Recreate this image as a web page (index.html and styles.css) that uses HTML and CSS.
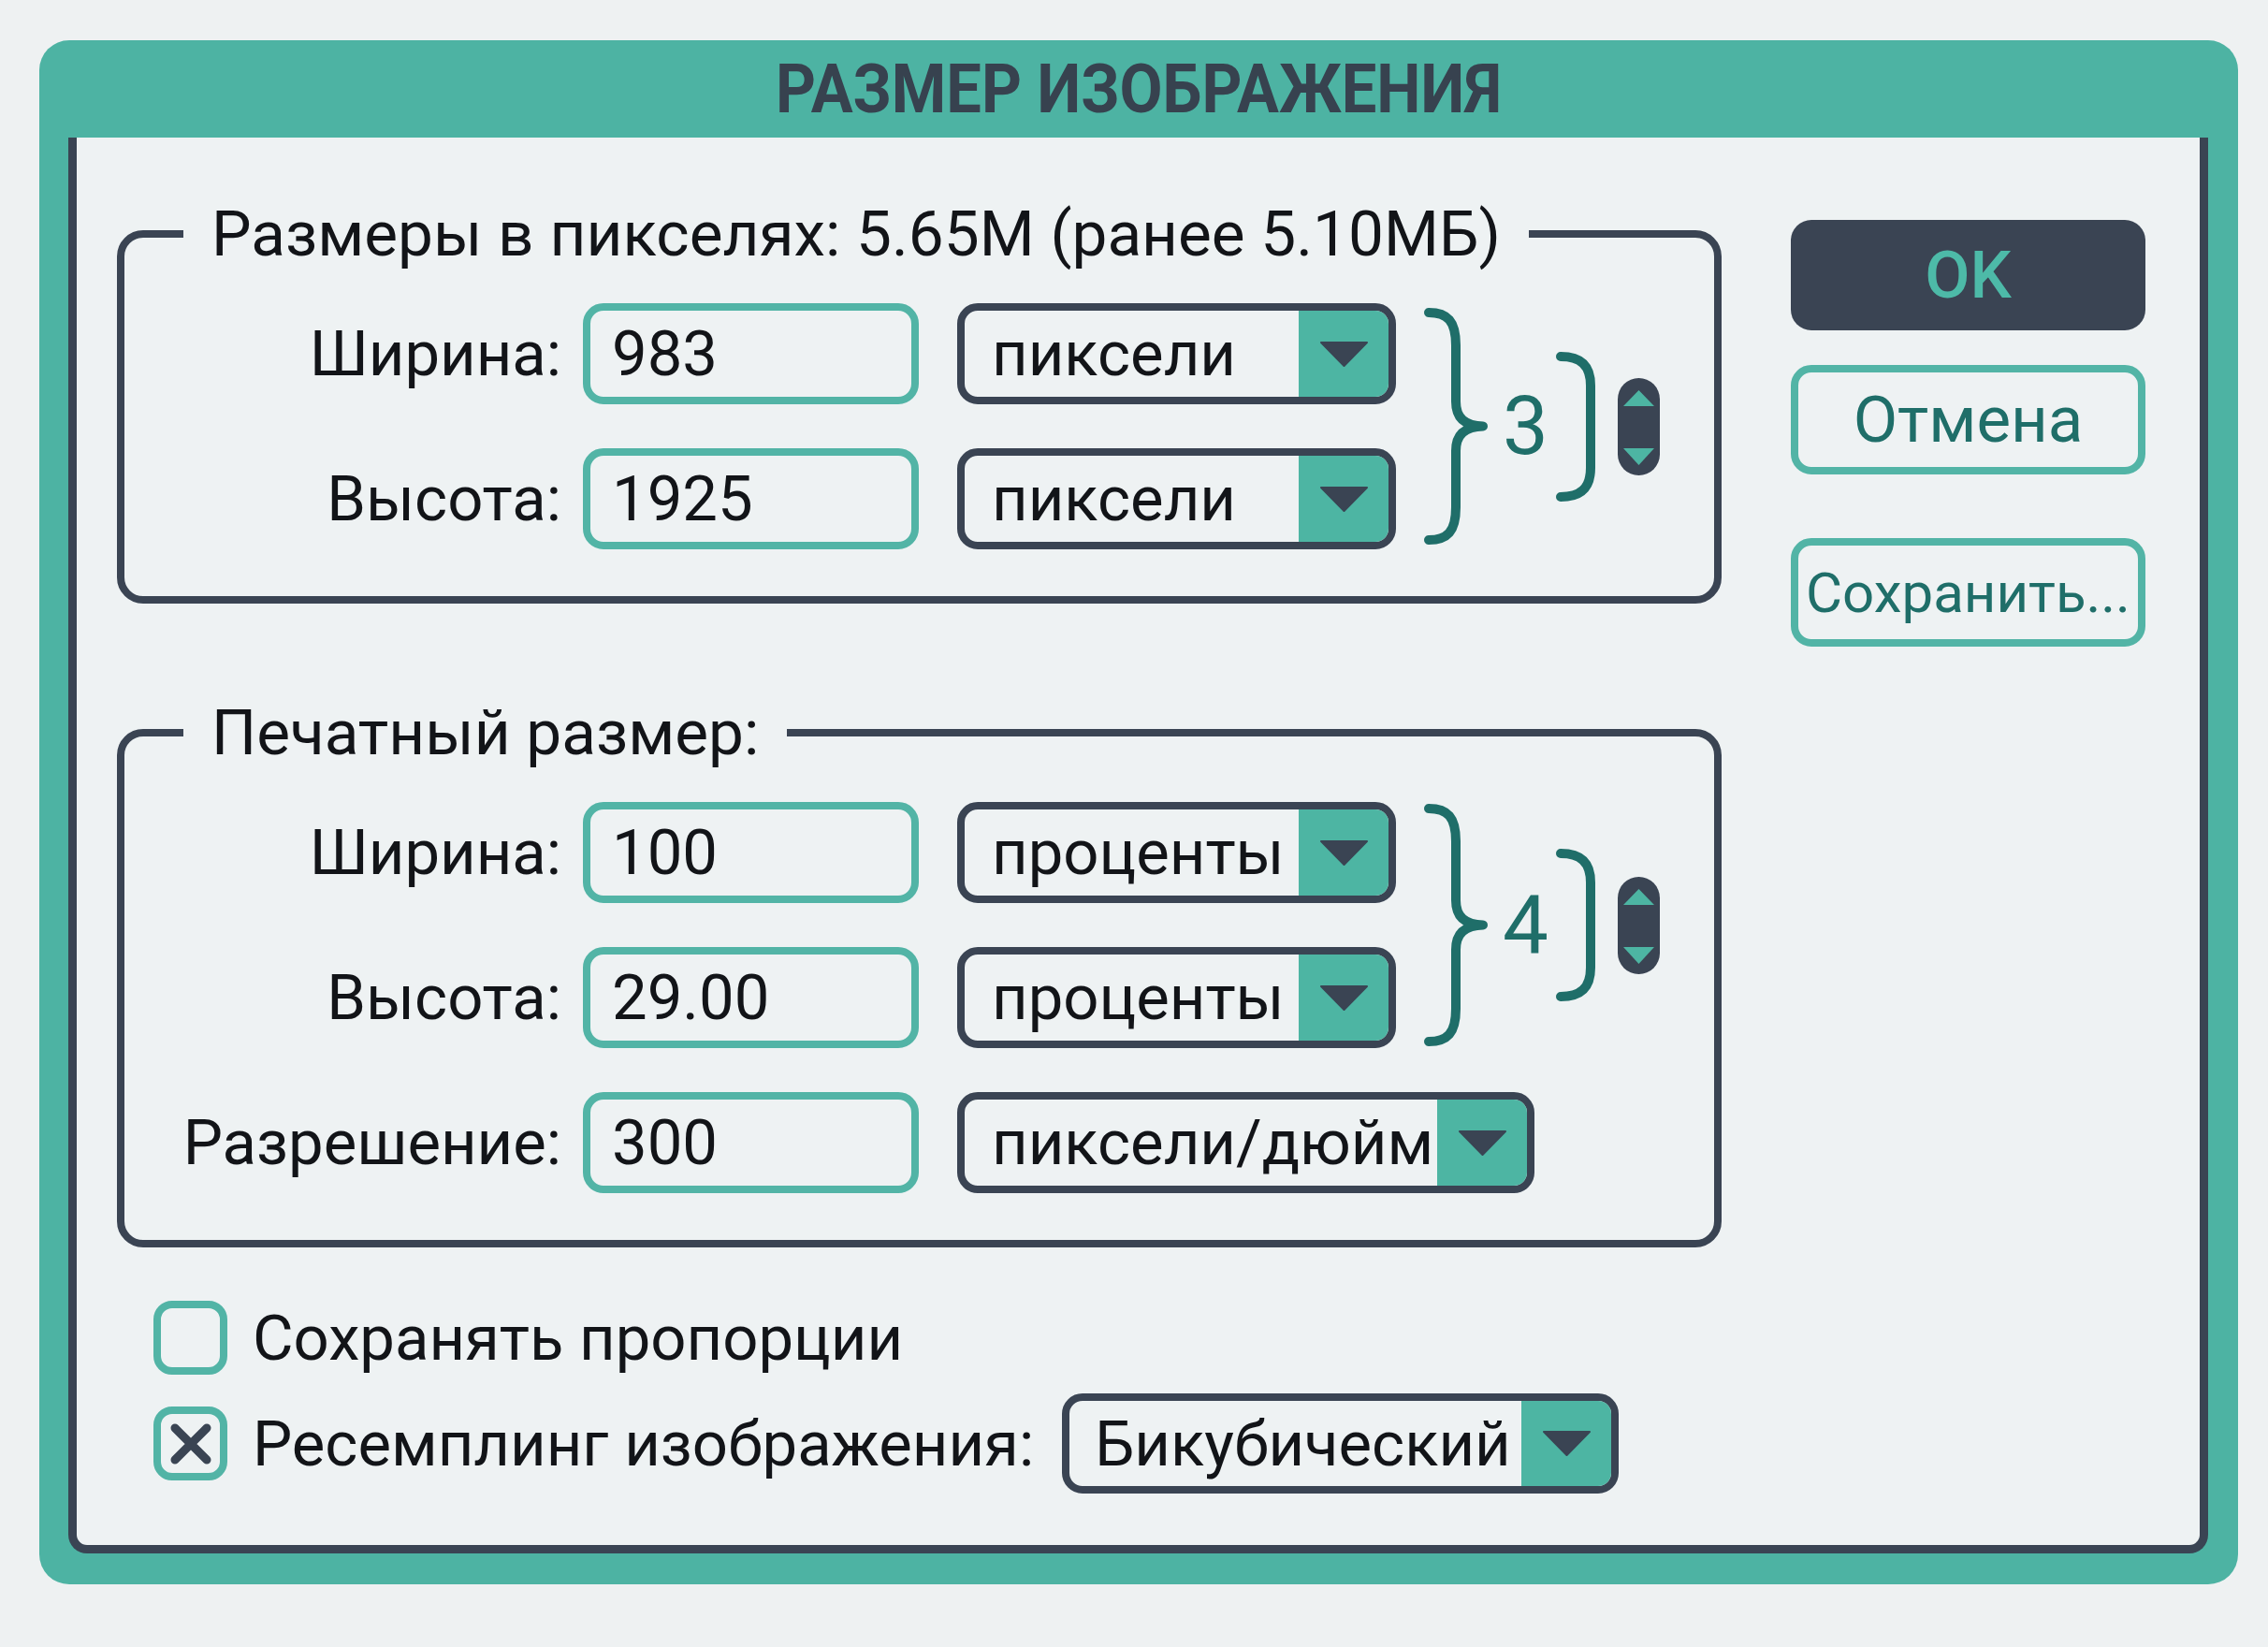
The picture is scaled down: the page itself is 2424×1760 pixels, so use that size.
FILE: index.html
```html
<!DOCTYPE html>
<html lang="ru">
<head>
<meta charset="utf-8">
<title>Размер изображения</title>
<link rel="stylesheet" href="styles.css">
</head>
<body>
<div class="dialog">
  <div class="titlebar"><span class="title">РАЗМЕР ИЗОБРАЖЕНИЯ</span></div>
  <div class="panel">
    <div class="main">
      <fieldset class="group">
        <legend>Размеры в пикселях: 5.65M (ранее 5.10МБ)</legend>
        <div class="grid">
          <span class="lbl">Ширина:</span>
          <div class="field">983</div>
          <div class="select"><span class="sel-text">пиксели</span><span class="sel-btn"><svg width="51" height="27" viewBox="0 0 51 27"><polygon points="1,1 50,1 25.5,26" fill="#3a4453" stroke="#3a4453" stroke-width="2" stroke-linejoin="round"/></svg></span></div>
          <div class="link two">
            <svg class="brace" width="68" height="253" viewBox="0 0 68 253"><path d="M5 5 C25 5 34 14 34 40 L34 100 C34 118 44 126 63 126.5 C44 127 34 135 34 153 L34 213 C34 239 25 248 5 248" fill="none" stroke="#1f6e69" stroke-width="10" stroke-linecap="round" stroke-linejoin="round"/></svg>
            <span class="num">3</span>
            <svg class="bracket" width="44" height="160" viewBox="0 0 44 160"><path d="M5 5 C26 5 37 14 37 36 L37 124 C37 146 26 155 5 155" fill="none" stroke="#1f6e69" stroke-width="10" stroke-linecap="round"/></svg>
            <span class="spin"><svg width="45" height="104" viewBox="0 0 45 104"><polygon points="6,30 39,30 22.5,13" fill="#4db5a3"/><polygon points="6,75 39,75 22.5,93" fill="#4db5a3"/></svg></span>
          </div>
          <span class="lbl">Высота:</span>
          <div class="field">1925</div>
          <div class="select"><span class="sel-text">пиксели</span><span class="sel-btn"><svg width="51" height="27" viewBox="0 0 51 27"><polygon points="1,1 50,1 25.5,26" fill="#3a4453" stroke="#3a4453" stroke-width="2" stroke-linejoin="round"/></svg></span></div>
        </div>
      </fieldset>

      <fieldset class="group second">
        <legend>Печатный размер:</legend>
        <div class="grid">
          <span class="lbl">Ширина:</span>
          <div class="field">100</div>
          <div class="select"><span class="sel-text">проценты</span><span class="sel-btn"><svg width="51" height="27" viewBox="0 0 51 27"><polygon points="1,1 50,1 25.5,26" fill="#3a4453" stroke="#3a4453" stroke-width="2" stroke-linejoin="round"/></svg></span></div>
          <div class="link two">
            <svg class="brace" width="68" height="259" viewBox="0 0 68 259"><path d="M5 5 C25 5 34 14 34 40 L34 103 C34 121 44 129 63 129.5 C44 130 34 138 34 156 L34 219 C34 245 25 254 5 254" fill="none" stroke="#1f6e69" stroke-width="10" stroke-linecap="round" stroke-linejoin="round"/></svg>
            <span class="num">4</span>
            <svg class="bracket" width="44" height="163" viewBox="0 0 44 163"><path d="M5 5 C26 5 37 14 37 36 L37 127 C37 149 26 158 5 158" fill="none" stroke="#1f6e69" stroke-width="10" stroke-linecap="round"/></svg>
            <span class="spin"><svg width="45" height="104" viewBox="0 0 45 104"><polygon points="6,30 39,30 22.5,13" fill="#4db5a3"/><polygon points="6,75 39,75 22.5,93" fill="#4db5a3"/></svg></span>
          </div>
          <span class="lbl">Высота:</span>
          <div class="field">29.00</div>
          <div class="select"><span class="sel-text">проценты</span><span class="sel-btn"><svg width="51" height="27" viewBox="0 0 51 27"><polygon points="1,1 50,1 25.5,26" fill="#3a4453" stroke="#3a4453" stroke-width="2" stroke-linejoin="round"/></svg></span></div>
          <span class="lbl">Разрешение:</span>
          <div class="field">300</div>
          <div class="select wide"><span class="sel-text">пиксели/дюйм</span><span class="sel-btn"><svg width="51" height="27" viewBox="0 0 51 27"><polygon points="1,1 50,1 25.5,26" fill="#3a4453" stroke="#3a4453" stroke-width="2" stroke-linejoin="round"/></svg></span></div>
        </div>
      </fieldset>

      <div class="opts">
        <div class="opt">
          <span class="check"></span>
          <span class="opt-text">Сохранять пропорции</span>
        </div>
        <div class="opt tall">
          <span class="check"><svg width="46" height="46" viewBox="0 0 46 46"><path d="M6 6 L40 40 M40 6 L6 40" stroke="#3a4453" stroke-width="9" stroke-linecap="round"/></svg></span>
          <span class="opt-text">Ресемплинг изображения:</span>
          <div class="select resample"><span class="sel-text">Бикубический</span><span class="sel-btn"><svg width="51" height="27" viewBox="0 0 51 27"><polygon points="1,1 50,1 25.5,26" fill="#3a4453" stroke="#3a4453" stroke-width="2" stroke-linejoin="round"/></svg></span></div>
        </div>
      </div>
    </div>

    <div class="buttons">
      <div class="btn ok">OK</div>
      <div class="btn cancel">Отмена</div>
      <div class="btn save">Сохранить...</div>
    </div>
  </div>
</div>
</body>
</html>
```

FILE: styles.css
```css
html, body {
  margin: 0;
  padding: 0;
  background: #eef1f2;
}

body {
  padding: 43px 0 0 42px;
  font-family: Roboto, "Noto Sans", "DejaVu Sans", sans-serif;
  color: #121418;
}

.dialog {
  box-sizing: border-box;
  width: 2350px;
  height: 1650px;
  background: #4db3a3;
  border-radius: 32px;
  padding: 0 32px 33px 31px;
  display: flex;
  flex-direction: column;
}

.titlebar {
  height: 104px;
  display: flex;
  align-items: center;
  justify-content: center;
  flex: none;
}

.title {
  display: inline-block;
  font-weight: 700;
  font-size: 73px;
  line-height: 1;
  color: #37424f;
  transform: scaleX(0.915);
  white-space: nowrap;
}

.panel {
  box-sizing: border-box;
  flex: 1;
  background: #eef2f3;
  border: 9px solid #3a4453;
  border-top: 0;
  border-radius: 0 0 20px 20px;
  padding: 61px 58px 0 43px;
  display: flex;
  gap: 74px;
}

.main {
  width: 1715px;
  flex: none;
}

.group {
  box-sizing: border-box;
  width: 1715px;
  margin: 0;
  padding: 32px 0 50px 0;
  border: 8px solid #3a4453;
  border-radius: 28px;
  min-width: 0;
}

.group legend {
  margin-left: 63px;
  padding: 0 30px;
  font-size: 67.5px;
  line-height: 84px;
  color: #121418;
  white-space: nowrap;
}

.group.second {
  margin-top: 96px;
}

.grid {
  display: grid;
  grid-template-columns: 490px 400px 499px auto;
  grid-auto-rows: 108px;
  row-gap: 47px;
  align-items: center;
}

.lbl {
  text-align: right;
  padding-right: 23px;
  font-size: 67px;
  line-height: 1;
  white-space: nowrap;
}

.field {
  box-sizing: border-box;
  width: 359px;
  height: 108px;
  border: 8px solid #52b4a6;
  border-radius: 22px;
  padding-left: 23px;
  display: flex;
  align-items: center;
  font-size: 67px;
  background: #eef2f3;
}

.select {
  box-sizing: border-box;
  width: 469px;
  height: 108px;
  border: 8px solid #3a4453;
  border-radius: 22px;
  overflow: hidden;
  display: flex;
  align-items: stretch;
  background: #eef2f3;
}

.select.wide {
  width: 617px;
  grid-column: 3 / 5;
}

.select.resample {
  width: 595px;
  height: 107px;
  margin-left: 30px;
}

.sel-text {
  flex: 1;
  display: flex;
  align-items: center;
  padding-left: 29px;
  font-size: 67px;
  white-space: nowrap;
  overflow: hidden;
}

.resample .sel-text {
  padding-left: 27px;
}

.sel-btn {
  width: 96px;
  flex: none;
  background: #4db5a3;
  display: flex;
  align-items: center;
  justify-content: center;
}

.link {
  grid-column: 4;
  grid-row: 1 / span 2;
  display: flex;
  align-items: center;
  align-self: center;
}

.brace {
  display: block;
  flex: none;
}

.num {
  font-size: 87px;
  line-height: 1;
  color: #1f6e69;
  margin: 0 8px 0 16px;
}

.bracket {
  display: block;
  flex: none;
}

.spin {
  display: block;
  width: 45px;
  height: 104px;
  border-radius: 23px;
  background: #3a4453;
  margin-left: 22px;
}

.spin svg {
  display: block;
}

.opts {
  margin-top: 57px;
  padding-left: 39px;
}

.opt {
  display: flex;
  align-items: center;
  height: 79px;
}

.opt.tall {
  height: 107px;
  margin-top: 20px;
}

.check {
  box-sizing: border-box;
  width: 79px;
  height: 79px;
  border: 8px solid #52b4a6;
  border-radius: 20px;
  display: flex;
  align-items: center;
  justify-content: center;
  flex: none;
}

.opt-text {
  margin-left: 27px;
  font-size: 67px;
  white-space: nowrap;
}

.buttons {
  width: 379px;
  flex: none;
  margin-top: 27px;
  display: flex;
  flex-direction: column;
}

.btn {
  box-sizing: border-box;
  width: 379px;
  display: flex;
  align-items: center;
  justify-content: center;
  border-radius: 22px;
  white-space: nowrap;
}

.btn.ok {
  height: 118px;
  background: #3a4453;
  color: #4dbaa8;
  font-size: 70px;
  font-weight: 500;
}

.btn.cancel {
  height: 117px;
  margin-top: 37px;
  border: 8px solid #52b4a6;
  color: #1f6e69;
  font-size: 69px;
}

.btn.save {
  height: 116px;
  margin-top: 68px;
  border: 8px solid #52b4a6;
  color: #1f6e69;
  font-size: 60px;
}
```
